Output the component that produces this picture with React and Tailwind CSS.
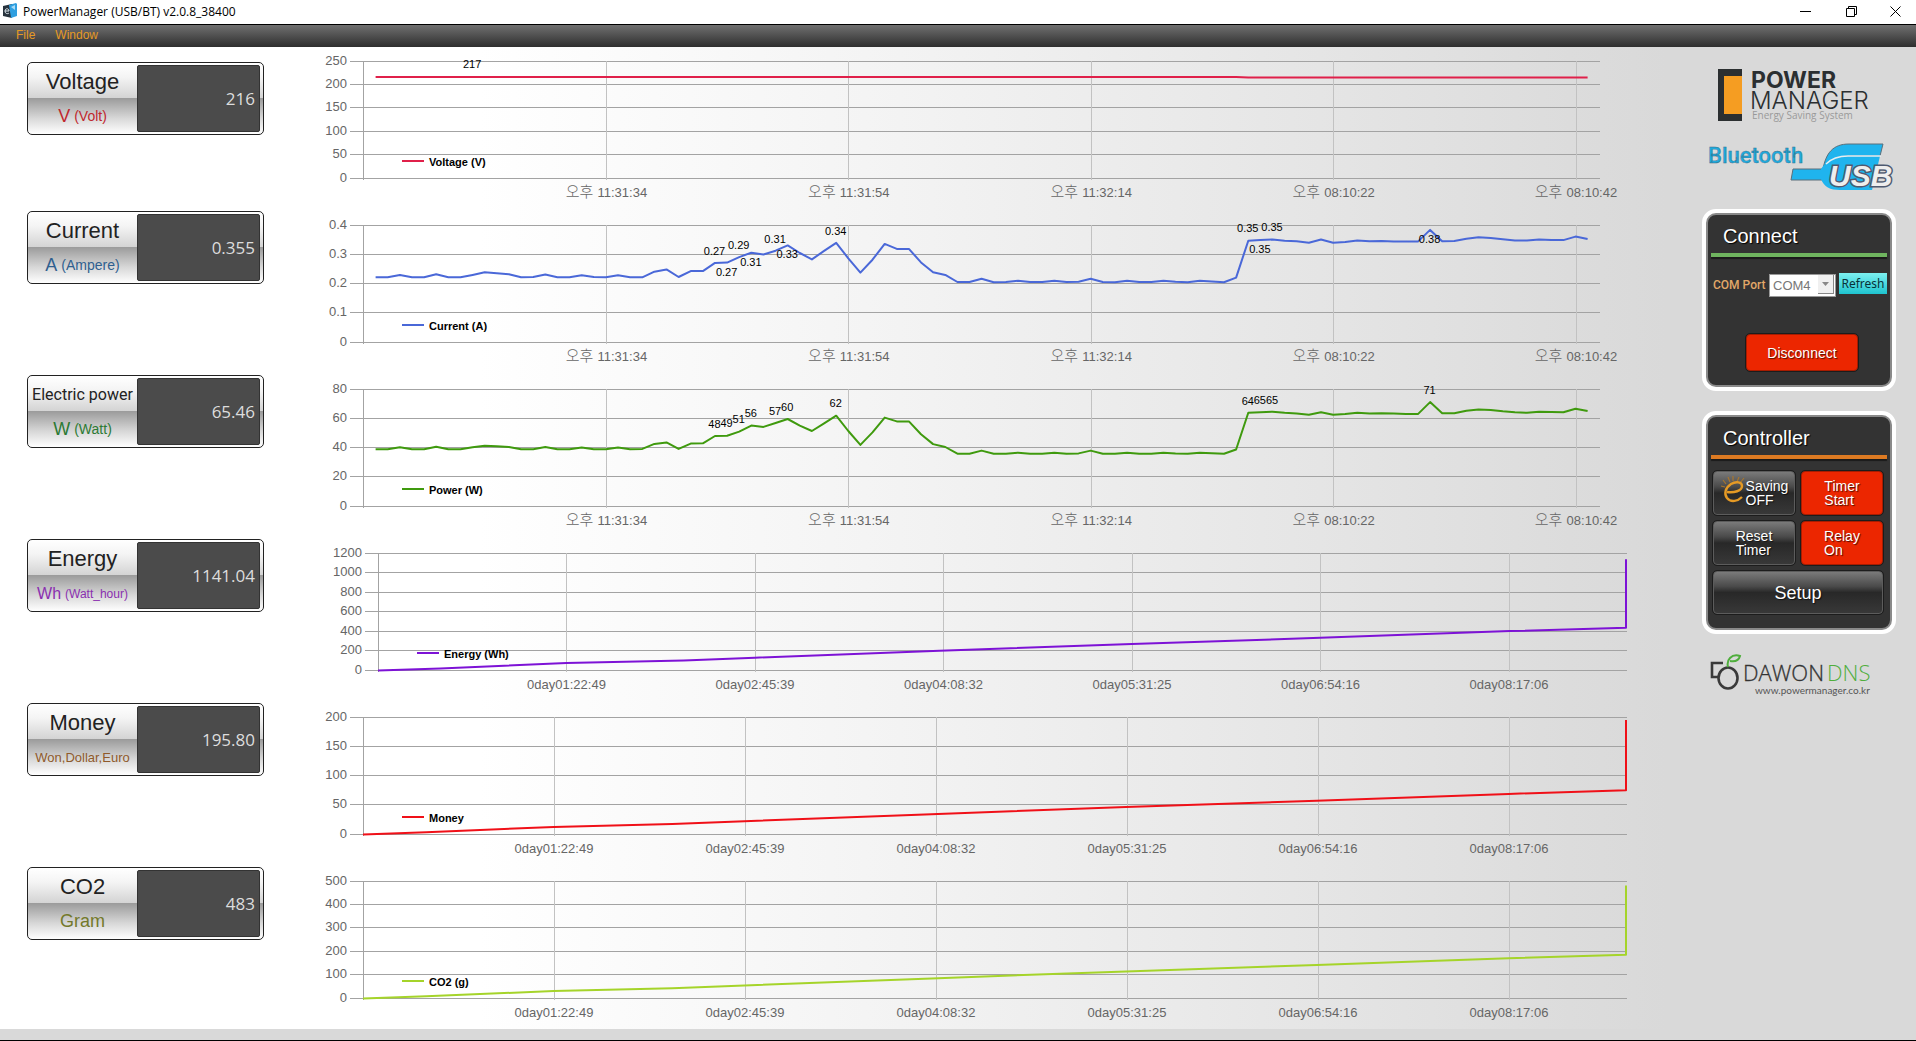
import React from "react";
import clsx from "clsx";

const METERS = [
  { name: "Voltage", unit: "V", detail: "(Volt)", value: "216", color: "text-[#c0272d]" },
  { name: "Current", unit: "A", detail: "(Ampere)", value: "0.355", color: "text-[#2f5f8f]" },
  { name: "Electric power", unit: "W", detail: "(Watt)", value: "65.46", color: "text-[#2c7a34]", narrow: true },
  { name: "Energy", unit: "Wh", detail: "(Watt_hour)", value: "1141.04", color: "text-[#8a2fb0]", small: true },
  { name: "Money", detail: "Won,Dollar,Euro", value: "195.80", color: "text-[#8f5a2b]" },
  { name: "CO2", unit: "Gram", value: "483", color: "text-[#73792a]" },
];

const CURRENT = [
  0.223, 0.223, 0.231, 0.223, 0.223, 0.233, 0.223, 0.223, 0.231, 0.24, 0.237, 0.233, 0.223,
  0.224, 0.232, 0.223, 0.223, 0.23, 0.224, 0.223, 0.23, 0.223, 0.223, 0.242, 0.25, 0.224,
  0.244, 0.244, 0.272, 0.273, 0.292, 0.307, 0.301, 0.314, 0.332, 0.306, 0.284, 0.313, 0.341,
  0.288, 0.239, 0.283, 0.337, 0.32, 0.32, 0.274, 0.24, 0.231, 0.207, 0.207, 0.218, 0.206,
  0.207, 0.211, 0.207, 0.207, 0.211, 0.207, 0.208, 0.218, 0.207, 0.206, 0.211, 0.207, 0.207,
  0.211, 0.208, 0.206, 0.211, 0.209, 0.206, 0.222, 0.348, 0.35, 0.352, 0.348, 0.346, 0.341,
  0.352, 0.341, 0.344, 0.349, 0.346, 0.347, 0.345, 0.345, 0.345, 0.385, 0.346, 0.347, 0.355,
  0.36, 0.357, 0.353, 0.349, 0.349, 0.352, 0.35, 0.35, 0.362, 0.354,
];

const POWER = [
  39.1, 39.1, 40.5, 39.1, 39.1, 40.9, 39.1, 39.1, 40.5, 41.6, 41.2, 40.7, 39.1, 39.2, 40.6,
  39.1, 39.1, 40.4, 39.2, 39.1, 40.3, 39.1, 39.4, 42.8, 43.8, 39.4, 43, 43.2, 48.2, 48.4,
  51.2, 55.3, 54.4, 57.1, 59.8, 55.3, 51.6, 56.9, 62.1, 51.6, 42.1, 50.7, 60.8, 58.2, 58.2,
  49.4, 42.7, 40.7, 36.1, 36.1, 38.2, 36, 36.1, 36.8, 36.1, 36.1, 36.8, 36.1, 36.3, 38.2,
  36.1, 36, 36.8, 36.1, 36.1, 36.8, 36.3, 36, 36.8, 36.4, 36, 39, 64.1, 64.4, 64.8, 64.1,
  63.5, 62.8, 64.4, 62.8, 63.2, 64.1, 63.5, 63.7, 63.5, 63.2, 63.2, 71.4, 63.7, 63.7, 65.5,
  66.4, 66, 65.1, 64.4, 64.1, 64.8, 64.6, 64.4, 66.9, 65.3,
];

const VOLTAGE = CURRENT.map((_, i) => (i < 72 ? 217 : 215.5));

// share of the elapsed time -> share of the total collected so far
const GROWTH = [
  [0, 0], [0.05, 0.05], [0.151, 0.172], [0.245, 0.235], [0.302, 0.3], [0.45, 0.46],
  [0.604, 0.62], [0.755, 0.765], [0.907, 0.92], [1, 1],
];

const CLOCK_TICKS = [
  [20, "11:31:34"],
  [40, "11:31:54"],
  [60, "11:32:14"],
  [80, "08:10:22"],
  [100, "08:10:42"],
];
const DAY_TICKS = ["0day01:22:49", "0day02:45:39", "0day04:08:32", "0day05:31:25", "0day06:54:16", "0day08:17:06"];

const TOP = 10;
const PLOT = 117;
const SAMPLE = 12.12;
const END = 1315;

const Chart = ({ title, color, max, step, axis = 53, right, ticks, meridiem, points, labels = [] }) => {
  const y = (v) => TOP + PLOT - (v / max) * PLOT;
  const rows = [];
  for (let v = 0; v <= max + step / 2; v += step) rows.push(Number(v.toFixed(1)));

  return (
    <svg viewBox="0 0 1330 150" className="block h-auto w-full" role="img" aria-label={title}>
      {rows.map((v) => {
        const line = Math.floor(y(v)) + 0.5;
        return (
          <g key={v}>
            <line x1={axis - 13} x2={right} y1={line} y2={line} stroke="#a3a3a3" />
            <text x={axis - 16} y={line + 3.5} textAnchor="end" className="fill-[#666] text-[13px]">
              {v}
            </text>
          </g>
        );
      })}
      <line x1={axis + 0.5} x2={axis + 0.5} y1={TOP} y2={TOP + PLOT + 2} stroke="#a3a3a3" />
      {ticks.map(([x, label]) => (
        <g key={label}>
          <line x1={Math.floor(x) + 0.5} x2={Math.floor(x) + 0.5} y1={TOP} y2={TOP + PLOT + 2} stroke="#c2c2c2" />
          <text x={x} y={TOP + PLOT + 19} textAnchor="middle" className="fill-[#666] text-[13px]">
            {meridiem && <tspan className="text-[15px] font-light">{meridiem} </tspan>}
            {label}
          </text>
        </g>
      ))}
      <polyline
        points={points.map(([x, v]) => `${x.toFixed(1)},${(y(v) + 0.5).toFixed(1)}`).join(" ")}
        fill="none"
        stroke={color}
        strokeWidth="2"
        strokeLinejoin="round"
      />
      {labels.map(([n, label, baseline]) => (
        <text key={n} x={axis + n * SAMPLE} y={baseline} textAnchor="middle" className="fill-black text-[11px]">
          {label}
        </text>
      ))}
      <line x1={axis + 39} x2={axis + 61} y1={TOP + 100} y2={TOP + 100} stroke={color} strokeWidth="2" />
      <text x={axis + 66} y={TOP + 105} className="fill-black text-[11px] font-bold">
        {title}
      </text>
    </svg>
  );
};

const LiveChart = ({ data, ...props }) => (
  <Chart
    {...props}
    right={1290}
    meridiem="오후"
    ticks={CLOCK_TICKS.map(([n, label]) => [54 + n * SAMPLE, label])}
    points={data.map((v, i) => [53.5 + (i + 1) * SAMPLE, v])}
  />
);

const TotalChart = ({ axis = 53, spacing = 191, last, peak, ...props }) => (
  <Chart
    {...props}
    axis={axis}
    right={END + 2}
    ticks={DAY_TICKS.map((label, i) => [axis + (i + 1) * spacing, label])}
    points={[...GROWTH.map(([t, share]) => [axis + t * (END + 1 - axis), share * last]), [END + 1, peak]]}
  />
);

const Meter = ({ name, unit, detail, value, color, narrow, small }) => (
  <div className="flex h-[73px] rounded-[5px] border border-[#222] bg-[linear-gradient(to_bottom,#fff_0%,#f4f4f4_20%,#d4d4d4_49%,#9c9c9c_50%,#d8d8d8_78%,#fff_100%)] py-[2px] pr-[3px]">
    <div className="flex min-w-0 flex-1 flex-col items-center">
      <div
        className={clsx(
          "flex h-[34px] items-center whitespace-nowrap text-[#222]",
          narrow ? "font-['Roboto',sans-serif] text-[16px]" : "text-[22px]"
        )}
      >
        {name}
      </div>
      <div className={clsx("flex h-[34px] items-center gap-1 pt-[3px] whitespace-nowrap", color)}>
        {unit && <span className={small ? "text-[16px]" : "text-[18px]"}>{unit}</span>}
        {detail && <span className={small ? "text-[12px]" : unit ? "text-[14px]" : "text-[13px]"}>{detail}</span>}
      </div>
    </div>
    <output
      aria-label={name}
      className="flex w-[123px] shrink-0 items-center justify-end rounded-[2px] border border-[#333] bg-[#4b4b4b] pr-1 font-['Open_Sans',sans-serif] text-[17px] text-[#ddd]"
    >
      {value}
    </output>
  </div>
);

const Panel = ({ title, rule, children }) => (
  <section className="rounded-[14px] border-4 border-white bg-white">
    <div className="rounded-[10px] border-2 border-[#8a8a8a] bg-[#333] px-[3px] pb-[14px]">
      <h2 className="px-3 pt-[9px] pb-[5px] text-[20px] leading-6 text-white [text-shadow:1px_1px_1px_#000]">{title}</h2>
      <div className={clsx("h-1 shadow-[0_2px_1px_#1a1a1a]", rule)} />
      {children}
    </div>
  </section>
);

const PadButton = ({ red, className, children }) => (
  <button
    type="button"
    className={clsx(
      "flex items-center justify-center rounded-[4px] border text-left leading-[14px] text-white outline-1 outline-[#1c1c1c] [text-shadow:1px_1px_1px_#000a]",
      red
        ? "border-[#a81c00] bg-[#ec2600]"
        : "border-[#5c5c5c] bg-[linear-gradient(to_bottom,#7a7a7a_0%,#4a4a4a_35%,#282828_50%,#383838_100%)]",
      className
    )}
  >
    {children}
  </button>
);

const PowerManagerLogo = () => (
  <svg viewBox="0 0 194 60" className="block w-full" role="img" aria-label="Power Manager">
    <path d="M16 2h24v52H16z" fill="#2b2f31" />
    <path d="M22 9h18v38H22z" fill="#f59d22" />
    <text x="49" y="21" className="fill-[#2b2f31] font-['Inter',sans-serif] text-[23px] font-bold">POWER</text>
    <text x="48" y="42" className="fill-[#2b2f31] font-['Inter',sans-serif] text-[24px] font-light">MANAGER</text>
    <text x="50" y="52" className="fill-[#999] font-['Open_Sans',sans-serif] text-[10px]">Energy Saving System</text>
  </svg>
);

const ConnectionLogo = () => (
  <svg viewBox="0 0 194 66" className="block w-full" role="img" aria-label="Bluetooth USB">
    <text x="6" y="28" fill="#1fa9dc" stroke="#3b6f88" strokeWidth="0.4" className="font-['Roboto',sans-serif] text-[22px] font-medium">
      Bluetooth
    </text>
    <path d="M91 34h30c3-16 10-25 26-25h34l-3 12h-30c-10 0-16 3-21 9l-3 6c-1 4-2 6-3 9H89z" fill="#1fb4ee" stroke="#5b6f7a" strokeWidth="1" />
    <path d="M119 34c6-9 14-13 26-13h33l-8 34h-32c-10 0-16-3-19-11z" fill="#1fb4ee" />
    <path d="M124 29c6-6 12-8 22-8h33" fill="none" stroke="#e6eef2" strokeWidth="1.5" />
    <text x="127" y="51" className="fill-[#eee] text-[30px] font-bold italic" stroke="#4f5a70" strokeWidth="3" paintOrder="stroke">
      USB
    </text>
  </svg>
);

const DawonLogo = () => (
  <svg viewBox="0 0 194 48" className="block w-full" role="img" aria-label="Dawon DNS www.powermanager.co.kr">
    <path d="M21 9H10v14h7" fill="none" stroke="#3a3a3a" strokeWidth="2.6" />
    <ellipse cx="26" cy="24" rx="9.500" ry="10.500" fill="none" stroke="#3a3a3a" strokeWidth="2.6" />
    <path d="M26 13c-1-4 0-7 2-9 3-3 7-3 10-2-1 4-4 6-10 5" fill="none" stroke="#4fae3c" strokeWidth="2" />
    <text x="41" y="27" className="fill-[#333] font-['Open_Sans',sans-serif] text-[22px] font-light" stroke="#333" strokeWidth="0.3">DAWON</text>
    <text x="125" y="27" className="fill-[#4fae3c] font-['Open_Sans',sans-serif] text-[22px] font-light">DNS</text>
    <text x="53" y="40" className="fill-[#555] font-['Lato',sans-serif] text-[10px]">
      www.powermanager.co.kr
    </text>
  </svg>
);

const SavingIcon = () => (
  <svg viewBox="0 0 26 28" className="mb-2 h-7 w-[26px] shrink-0" aria-hidden="true">
    <path d="M3 5l3 4M8 2l2 5M13 1v5M19 2l-2 5M24 3l-4 5M1 11l4 1" stroke="#a8762e" strokeWidth="1.2" />
    <path d="M7 17c7 1 15-1 15-6 0-4-6-5-11-2-6 4-7 10-4 14 4 5 11 3 15-1" fill="none" stroke="#e59a25" strokeWidth="2.4" />
  </svg>
);

const TitleBar = () => (
  <header className="flex h-6 items-center bg-white pb-[2px] pl-[2px] text-black">
    <svg viewBox="0 0 16 16" className="h-4 w-4" aria-hidden="true">
      <path d="M1 3l9-2v14l-9-2z" fill="#27333d" />
      <path d="M7 2l7-2 1 1v12l-6 2z" fill="#2f9fe0" />
      <path d="M9 4l4-2v5z" fill="#a9dcf7" />
      <path d="M3 8h4c0-3-4-3-4 0s3 3 4 2" fill="none" stroke="#dfe8ee" />
    </svg>
    <h1 className="ml-[5px] flex-1 pt-px font-['Open_Sans','Noto_Sans_CJK_KR',sans-serif] text-[12px] leading-4">
      PowerManager (USB/BT) v2.0.8_38400
    </h1>
    <button type="button" aria-label="Minimize" className="flex h-5 w-[46px] items-center justify-center">
      <svg viewBox="0 0 11 11" className="w-[11px]"><path d="M0 5.500h11" stroke="#000" /></svg>
    </button>
    <button type="button" aria-label="Restore" className="flex h-5 w-[46px] items-center justify-center">
      <svg viewBox="0 0 11 11" className="w-[11px]">
        <path d="M.5 2.500h8v8h-8zM2.500 2.500v-2h8v8h-2" fill="none" stroke="#000" />
      </svg>
    </button>
    <button type="button" aria-label="Close" className="flex h-5 w-[42px] items-center justify-center">
      <svg viewBox="0 0 11 11" className="w-[11px]"><path d="M.5.5l10 10M10.500.5l-10 10" stroke="#000" /></svg>
    </button>
  </header>
);

export default function App() {
  return (
    <div className="flex min-h-screen flex-col border-b border-black bg-[#d9d9d9] font-['Liberation_Sans','Noto_Sans_CJK_KR',sans-serif]">
      <TitleBar />
      <nav className="flex h-[23px] items-center gap-5 border-t border-black bg-[linear-gradient(to_bottom,#707070,#2e2e2e)] pb-[2px] pl-4 text-[12px] text-[#e69a24]">
        <button type="button">File</button>
        <button type="button">Window</button>
      </nav>

      <main className="flex bg-[linear-gradient(to_right,#fff_0%,#fff_25%,#f3f3f3_47%,#e9e9e9_63%,#dcdcdc_82%,#d9d9d9_87%)]">
        <div className="w-[310px] shrink-0 pt-[15px] pr-[46px] pl-[27px]">
          {METERS.map((meter, i) => (
            <div key={meter.name} className={i === 0 ? "mb-[76px]" : "mb-[91px] last:mb-0"}>
              <Meter {...meter} />
            </div>
          ))}
        </div>

        <div className="flex min-w-0 flex-1 flex-col gap-[14px] pt-1 pb-2">
          <LiveChart title="Voltage (V)" color="#e0204a" max={250} step={50} data={VOLTAGE} labels={[[9, "217", 17]]} />
          <LiveChart
            title="Current (A)"
            color="#4a68d8"
            max={0.4}
            step={0.1}
            data={CURRENT}
            labels={[
              [29, "0.27", 40], [30, "0.27", 61], [31, "0.29", 34], [32, "0.31", 51], [34, "0.31", 28],
              [35, "0.33", 43], [39, "0.34", 20], [73, "0.35", 17], [74, "0.35", 38], [75, "0.35", 16],
              [88, "0.38", 28],
            ]}
          />
          <LiveChart
            title="Power (W)"
            color="#3f9a0e"
            max={80}
            step={20}
            data={POWER}
            labels={[
              [29, "48", 49], [30, "49", 48], [31, "51", 44], [32, "56", 38], [34, "57", 36], [35, "60", 32],
              [39, "62", 28], [73, "64", 26], [74, "65", 25], [75, "65", 25], [88, "71", 15],
            ]}
          />
          <TotalChart title="Energy (Wh)" color="#7d12d6" max={1200} step={200} axis={68} spacing={188.5} last={439} peak={1141} />
          <TotalChart title="Money" color="#f01018" max={200} step={50} last={75.5} peak={195.8} />
          <TotalChart title="CO2 (g)" color="#a5d42a" max={500} step={100} last={187} peak={483} />
        </div>

        <aside className="flex w-[276px] shrink-0 flex-col pt-5 pr-5 pl-[62px]">
          <PowerManagerLogo />
          <div className="mt-2 mb-2">
            <ConnectionLogo />
          </div>
          <Panel title="Connect" rule="bg-[#6fb45f]">
            <div className="mt-4 flex items-start">
              <label
                htmlFor="com-port"
                className="w-[58px] pt-[2px] pl-[2px] font-['Roboto',sans-serif] text-[12px] leading-5 font-medium whitespace-nowrap text-[#e2a868]"
              >
                COM Port
              </label>
              <div className="relative mr-[3px] flex-1">
                <select
                  id="com-port"
                  className="h-[23px] w-full appearance-none border border-[#999] bg-white pl-[3px] text-[13px] text-[#777]"
                >
                  <option>COM4</option>
                </select>
                <span className="pointer-events-none absolute top-[2px] right-[2px] flex h-[19px] w-4 items-center justify-center border-r border-b border-[#888] bg-[#f0f0f0]">
                  <svg viewBox="0 0 7 4" className="w-[7px]"><path d="M0 0h7L3.500 4z" fill="#888" /></svg>
                </span>
              </div>
              <button
                type="button"
                className="h-[21px] w-[48px] bg-[linear-gradient(to_bottom,#7cf0f0,#1fc4cf)] font-['Noto_Sans',sans-serif] text-[12px] leading-5 text-[#083038]"
              >
                Refresh
              </button>
            </div>
            <PadButton red className="mt-[37px] ml-[35px] h-[37px] w-[112px] text-[14px]">Disconnect</PadButton>
          </Panel>
          <div className="my-5">
            <Panel title="Controller" rule="bg-[#dd7a22]">
              <div className="mt-3 grid grid-cols-2 gap-[6px] pr-1 pl-[2px] text-[14px]">
                <PadButton className="h-11">
                  <SavingIcon />
                  <span>Saving<br />OFF</span>
                </PadButton>
                <PadButton red className="h-11"><span>Timer<br />Start</span></PadButton>
                <PadButton className="h-11"><span>Reset<br />Timer</span></PadButton>
                <PadButton red className="h-11"><span>Relay<br />On</span></PadButton>
                <PadButton className="col-span-2 h-[43px] text-[18px]">Setup</PadButton>
              </div>
            </Panel>
          </div>
          <a href="http://www.powermanager.co.kr">
            <DawonLogo />
          </a>
        </aside>
      </main>
    </div>
  );
}
